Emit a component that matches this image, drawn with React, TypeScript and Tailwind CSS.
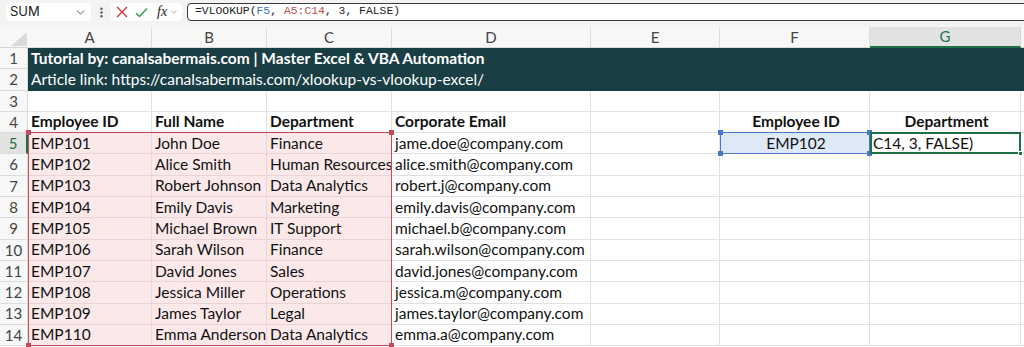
import React from 'react';
import { ChevronDown, EllipsisVertical } from 'lucide-react';

const sheetFont = { fontFamily: 'Lato, "Open Sans", sans-serif' };

const columns = ['A', 'B', 'C', 'D', 'E', 'F', 'G'];

const employees = [
  ['EMP101', 'John Doe', 'Finance', 'jame.doe@company.com'],
  ['EMP102', 'Alice Smith', 'Human Resources', 'alice.smith@company.com'],
  ['EMP103', 'Robert Johnson', 'Data Analytics', 'robert.j@company.com'],
  ['EMP104', 'Emily Davis', 'Marketing', 'emily.davis@company.com'],
  ['EMP105', 'Michael Brown', 'IT Support', 'michael.b@company.com'],
  ['EMP106', 'Sarah Wilson', 'Finance', 'sarah.wilson@company.com'],
  ['EMP107', 'David Jones', 'Sales', 'david.jones@company.com'],
  ['EMP108', 'Jessica Miller', 'Operations', 'jessica.m@company.com'],
  ['EMP109', 'James Taylor', 'Legal', 'james.taylor@company.com'],
  ['EMP110', 'Emma Anderson', 'Data Analytics', 'emma.a@company.com'],
];

// same track sizes for the cells and for the highlight layer on top
const sheetGrid =
  'grid grid-cols-[28px_124px_115px_125px_199px_129px_150px_151px_1fr] grid-rows-[21px_repeat(14,21.3px)]';

function Handle({ className }: { className: string }) {
  return <span className={`absolute w-[5px] h-[5px] ${className}`} />;
}

function FormulaBar() {
  return (
    <div className="h-[27px] bg-[#f3f3f3] flex items-start pt-[3px] pl-[6px]">
      <div className="w-[85px] h-[18px] bg-white rounded-[4px] flex items-center justify-between pl-[4px] pr-[4px]">
        <span className="text-[13px] text-[#222]" style={{ fontFamily: 'Inter, sans-serif' }}>SUM</span>
        <ChevronDown size={13} strokeWidth={1.6} className="text-[#444]" />
      </div>
      <div className="w-[20px] h-[18px] flex items-center justify-center">
        <EllipsisVertical size={13} strokeWidth={2.6} className="text-[#555]" />
      </div>
      <div className="w-[71px] h-[18px] bg-white rounded-[4px] flex items-center pl-[5px]">
        <svg width="12" height="12" viewBox="0 0 12 12" className="mr-[7px]">
          <path d="M1 1 L11 11 M11 1 L1 11" stroke="#d13438" strokeWidth="1.4" fill="none" />
        </svg>
        <svg width="13" height="11" viewBox="0 0 13 11" className="mr-[9px]">
          <path d="M1 6 L4.5 9.5 L12 1.5" stroke="#2e9a55" strokeWidth="1.4" fill="none" />
        </svg>
        <span className="text-[14px] italic text-[#222] leading-none" style={{ fontFamily: '"Liberation Serif", serif' }}>fx</span>
        <ChevronDown size={10} strokeWidth={1.4} className="text-[#777] ml-[2px]" />
      </div>
      <div className="flex-1 ml-[5px] mr-[-8px] h-[18px] bg-white border-[1.5px] border-[#3a3a3a] rounded-[4px] flex items-center pl-[7px]">
        <span className="text-[11.4px] text-[#222] whitespace-pre" style={{ fontFamily: '"Liberation Mono", monospace' }}>
          =VLOOKUP(<span className="text-[#3b72c6]">F5</span>, <span className="text-[#c0504d]">A5:C14</span>, 3, FALSE)
        </span>
      </div>
    </div>
  );
}

function Cell({ children, className = '' }: { children?: React.ReactNode; className?: string }) {
  return (
    <div className={`border-r border-b border-[#e1e1e1] flex items-center pl-[3px] whitespace-nowrap ${className}`}>
      {children}
    </div>
  );
}

function RowHead({ n, active = false }: { n: number; active?: boolean }) {
  return (
    <div
      className={
        active
          ? 'bg-[#e2e2e2] border-r-2 border-r-[#1e7145] border-b border-b-[#dcdcdc] flex items-center justify-center text-[#1e7145] text-[15px]'
          : 'bg-[#f7f7f7] border-r border-b border-[#dcdcdc] flex items-center justify-center text-[#444] text-[15px]'
      }
    >
      {n}
    </div>
  );
}

export default function App() {
  return (
    <div className="w-[1024px] h-[347px] overflow-hidden bg-white">
      <FormulaBar />
      <div className="grid text-[15.5px] text-[#111]" style={sheetFont}>
        <div className={`${sheetGrid} col-start-1 row-start-1`}>
          {/* column headers */}
          <div className="bg-[#f7f7f7] border-b border-[#d6d6d6] relative">
            <svg width="16" height="14" viewBox="0 0 16 14" className="absolute right-[1px] bottom-[1px]">
              <path d="M16 0 L16 14 L0 14 Z" fill="#dadada" />
            </svg>
          </div>
          {columns.map(c => (
            <div
              key={c}
              className={
                c === 'G'
                  ? 'bg-[#e2e2e2] border-r border-[#d6d6d6] border-b-2 border-b-[#1e7145] flex items-center justify-center text-[#1e7145] text-[15px]'
                  : 'bg-[#f7f7f7] border-r border-b border-[#dcdcdc] flex items-center justify-center text-[#444] text-[15px]'
              }
            >
              {c}
            </div>
          ))}
          <div className="bg-[#f7f7f7] border-b border-[#d6d6d6]" />

          <RowHead n={1} />
          <div className="col-span-8 bg-[#193e44] text-white font-bold flex items-center pl-[3px] whitespace-nowrap">
            Tutorial by: canalsabermais.com | Master Excel &amp; VBA Automation
          </div>

          <RowHead n={2} />
          <div className="col-span-8 bg-[#193e44] text-white flex items-center pl-[3px] whitespace-nowrap">
            Article link: https://canalsabermais.com/xlookup-vs-vlookup-excel/
          </div>

          <RowHead n={3} />
          {columns.map(c => <Cell key={c} />)}
          <Cell />

          <RowHead n={4} />
          <Cell className="font-bold">Employee ID</Cell>
          <Cell className="font-bold">Full Name</Cell>
          <Cell className="font-bold">Department</Cell>
          <Cell className="font-bold">Corporate Email</Cell>
          <Cell />
          <Cell className="font-bold justify-center pl-0">Employee ID</Cell>
          <Cell className="font-bold justify-center pl-0">Department</Cell>
          <Cell />

          {employees.map((emp, i) => {
            const row = i + 5;
            const active = row === 5;
            return (
              <React.Fragment key={emp[0]}>
                <RowHead n={row} active={active} />
                <Cell className="bg-[#fbe9ea] border-[#ecd4d6]">{emp[0]}</Cell>
                <Cell className="bg-[#fbe9ea] border-[#ecd4d6]">{emp[1]}</Cell>
                <Cell className="bg-[#fbe9ea] border-[#ecd4d6]">{emp[2]}</Cell>
                <Cell>{emp[3]}</Cell>
                <Cell />
                {active ? (
                  <>
                    <Cell className="bg-[#dfe8f6] justify-center pl-0">EMP102</Cell>
                    <Cell className="pl-[2px]">C14, 3, FALSE)</Cell>
                  </>
                ) : (
                  <>
                    <Cell />
                    <Cell />
                  </>
                )}
                <Cell />
              </React.Fragment>
            );
          })}
        </div>

        {/* range highlights drawn over the cells */}
        <div className={`${sheetGrid} col-start-1 row-start-1 pointer-events-none`}>
          <div className="col-start-2 col-end-5 row-start-6 row-end-16 -mt-[1px] border border-[#c24d5a] relative">
            <Handle className="bg-[#c24d5a] -left-[3px] -top-[3px]" />
            <Handle className="bg-[#c24d5a] -right-[3px] -top-[3px]" />
            <Handle className="bg-[#c24d5a] -left-[3px] -bottom-[3px]" />
            <Handle className="bg-[#c24d5a] -right-[3px] -bottom-[3px]" />
          </div>
          <div className="col-start-7 col-end-8 row-start-6 row-end-7 -mt-[1px] border border-[#4a78c6] relative">
            <Handle className="bg-[#4a78c6] -left-[3px] -top-[3px]" />
            <Handle className="bg-[#4a78c6] -right-[3px] -top-[3px]" />
            <Handle className="bg-[#4a78c6] -left-[3px] -bottom-[3px]" />
            <Handle className="bg-[#4a78c6] -right-[3px] -bottom-[3px]" />
          </div>
          <div className="col-start-8 col-end-9 row-start-6 row-end-7 -mt-[1px] border-2 border-[#1e7145] relative">
            <Handle className="bg-[#1e7145] -right-[4px] -bottom-[4px] border border-white" />
          </div>
        </div>
      </div>
    </div>
  );
}
